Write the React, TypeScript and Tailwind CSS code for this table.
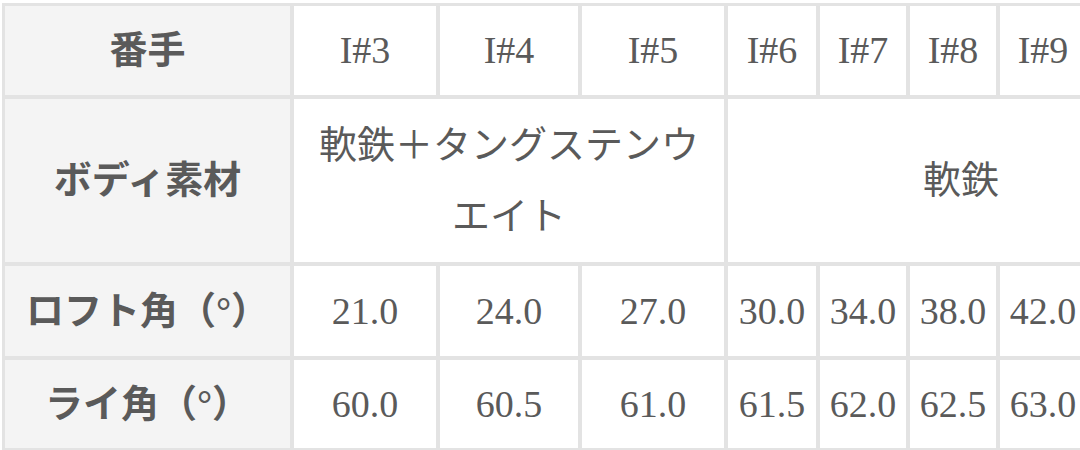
import React from "react";

const font = { fontFamily: '"Liberation Serif", "Noto Sans CJK JP", serif' };

function Th({ children }: { children: React.ReactNode }) {
  return (
    <div className="bg-[#f4f4f4] flex items-center justify-center font-bold text-[#5a5a5a] text-[38px] leading-[71px] whitespace-nowrap">
      {children}
    </div>
  );
}

function Td({ children, className = "" }: { children: React.ReactNode; className?: string }) {
  return (
    <div className={"bg-white flex items-center justify-center text-center text-[#5a5a5a] text-[38px] leading-[71px] whitespace-nowrap " + className}>
      {children}
    </div>
  );
}

export default function App() {
  const heads = ["I#3", "I#4", "I#5", "I#6", "I#7", "I#8", "I#9", "PW"];
  const loft = ["21.0", "24.0", "27.0", "30.0", "34.0", "38.0", "42.0", "46.0"];
  const lie = ["60.0", "60.5", "61.0", "61.5", "62.0", "62.5", "63.0", "63.5"];
  return (
    <div className="w-[1080px] h-[450px] overflow-hidden bg-white" style={font}>
      <div className="ml-[2px] mt-[3px] w-max p-[3px] bg-[#e3e3e3] grid grid-cols-[285px_142px_138px_142px_88px_86px_86px_86px_104px] grid-rows-[89px_163px_90px_88px] gap-[4px]">
        <Th>番手</Th>
        {heads.map((h) => (
          <Td key={h}>{h}</Td>
        ))}
        <Th>ボディ素材</Th>
        <Td className="col-span-3 !whitespace-normal px-5">軟鉄＋タングステンウエイト</Td>
        <Td className="col-span-5">軟鉄</Td>
        <Th>ロフト角（°）</Th>
        {loft.map((v, i) => (
          <Td key={i}>{v}</Td>
        ))}
        <Th>ライ角（°）</Th>
        {lie.map((v, i) => (
          <Td key={i}>{v}</Td>
        ))}
      </div>
    </div>
  );
}
